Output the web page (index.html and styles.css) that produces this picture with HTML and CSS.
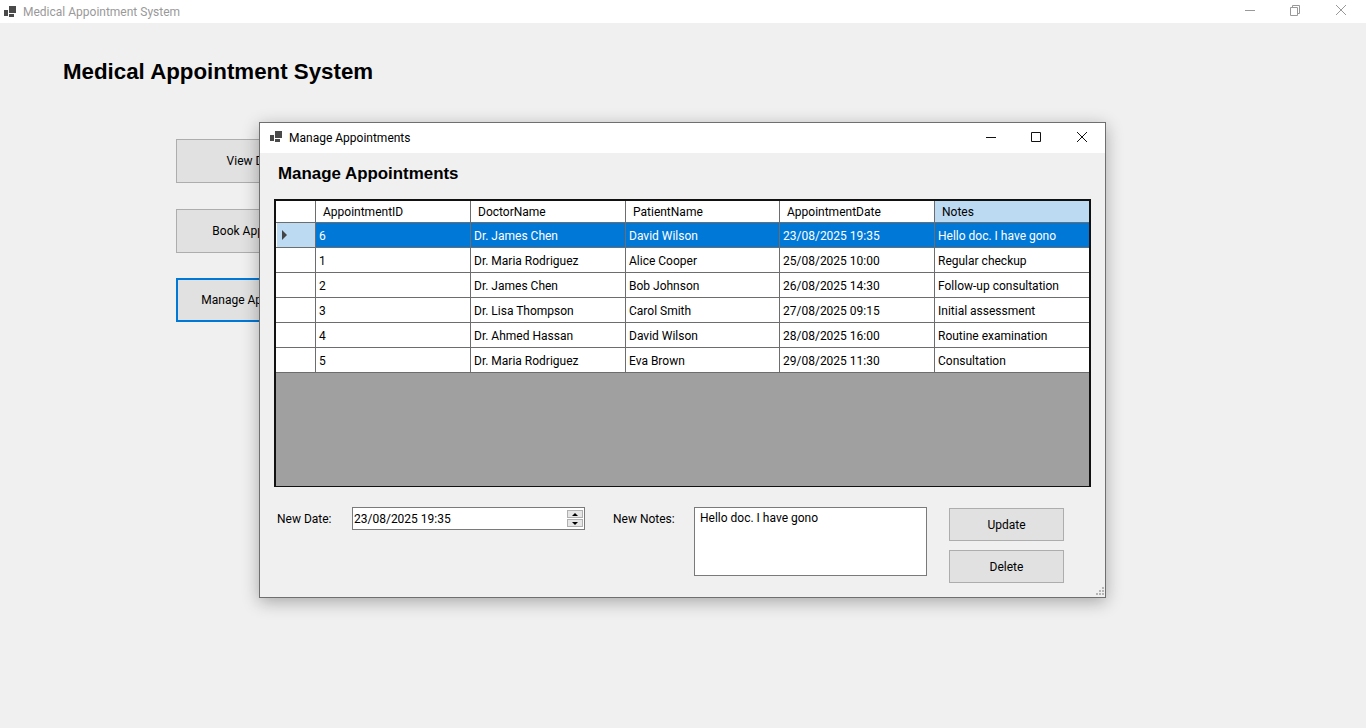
FILE: index.html
```html
<!DOCTYPE html>
<html>
<head>
	<meta charset="utf-8">
	<title>Medical Appointment System</title>
	<link rel="stylesheet" href="styles.css">
</head>
<body>
	<div class="titlebar main-titlebar">
		<svg class="app-icon" width="12" height="12" viewBox="0 0 12 12"><path fill="#4a4a4a" d="M0 4h4v6H0zM5 0h7v7H5zM5 8h5v3H5z"/></svg>
		<span class="title-text">Medical Appointment System</span>
		<div class="win-buttons">
			<svg width="11" height="11" viewBox="0 0 11 11"><path stroke="#999" fill="none" d="M0 5.5h10"/></svg>
			<svg width="11" height="11" viewBox="0 0 11 11"><path stroke="#999" fill="none" d="M.5 2.5h7v8h-7zM2.5 2.5v-2h7v8h-2"/></svg>
			<svg class="close" width="11" height="11" viewBox="0 0 11 11"><path stroke="#999" fill="none" d="M0 0l10 10M10 0L0 10"/></svg>
		</div>
	</div>

	<div class="main-body">
		<h1>Medical Appointment System</h1>
		<div class="menu">
			<button class="btn menu-btn">View Doctors</button>
			<button class="btn menu-btn">Book Appointment</button>
			<button class="btn menu-btn focused">Manage Appointments</button>
		</div>
	</div>

	<div class="dialog">
		<div class="titlebar dlg-titlebar">
			<svg class="app-icon" width="12" height="12" viewBox="0 0 12 12"><path fill="#4a4a4a" d="M0 4h4v6H0zM5 0h7v7H5zM5 8h5v3H5z"/></svg>
			<span class="dlg-title">Manage Appointments</span>
			<div class="dlg-buttons">
				<svg width="11" height="11" viewBox="0 0 11 11"><path stroke="#111" fill="none" d="M0 5.5h10"/></svg>
				<svg width="11" height="11" viewBox="0 0 11 11"><path stroke="#111" fill="none" d="M.5 .5h9v9h-9z"/></svg>
				<svg class="close" width="11" height="11" viewBox="0 0 11 11"><path stroke="#111" fill="none" d="M0 0l10 10M10 0L0 10"/></svg>
			</div>
		</div>
		<div class="dlg-body">
			<h2>Manage Appointments</h2>
			<div class="grid">
				<div class="row head">
					<div class="rowhead"></div>
					<div>AppointmentID</div>
					<div>DoctorName</div>
					<div>PatientName</div>
					<div>AppointmentDate</div>
					<div class="sorted">Notes</div>
				</div>
				<div class="row selected">
					<div class="rowhead"><span class="arrow"></span></div>
					<div>6</div><div>Dr. James Chen</div><div>David Wilson</div><div>23/08/2025 19:35</div><div>Hello doc. I have gono</div>
				</div>
				<div class="row">
					<div class="rowhead"></div>
					<div>1</div><div>Dr. Maria Rodriguez</div><div>Alice Cooper</div><div>25/08/2025 10:00</div><div>Regular checkup</div>
				</div>
				<div class="row">
					<div class="rowhead"></div>
					<div>2</div><div>Dr. James Chen</div><div>Bob Johnson</div><div>26/08/2025 14:30</div><div>Follow-up consultation</div>
				</div>
				<div class="row">
					<div class="rowhead"></div>
					<div>3</div><div>Dr. Lisa Thompson</div><div>Carol Smith</div><div>27/08/2025 09:15</div><div>Initial assessment</div>
				</div>
				<div class="row">
					<div class="rowhead"></div>
					<div>4</div><div>Dr. Ahmed Hassan</div><div>David Wilson</div><div>28/08/2025 16:00</div><div>Routine examination</div>
				</div>
				<div class="row">
					<div class="rowhead"></div>
					<div>5</div><div>Dr. Maria Rodriguez</div><div>Eva Brown</div><div>29/08/2025 11:30</div><div>Consultation</div>
				</div>
			</div>
			<div class="form">
				<label class="lbl date-lbl">New Date:</label>
				<div class="date-field">
					<span>23/08/2025 19:35</span>
					<div class="spinner">
						<div class="spin"><span class="up"></span></div>
						<div class="spin"><span class="down"></span></div>
					</div>
				</div>
				<label class="lbl notes-lbl">New Notes:</label>
				<div class="notes">Hello doc. I have gono</div>
				<div class="actions">
					<button class="btn">Update</button>
					<button class="btn">Delete</button>
				</div>
			</div>
		</div>
		<svg class="grip" width="10" height="10" viewBox="0 0 10 10"><path fill="#b5b5b5" d="M7 0h2v2H7zM4 3h2v2H4zM7 3h2v2H7zM1 6h2v2H1zM4 6h2v2H4zM7 6h2v2H7z"/></svg>
	</div>
</body>
</html>
```

FILE: styles.css
```css
* {box-sizing:border-box;}

html, body {height:100%;}
body {margin:0; background-color:#f0f0f0; font:12px Roboto, "Noto Sans", sans-serif; color:#000; overflow:hidden;}

.titlebar {display:flex; align-items:center; background-color:#fff;}
.main-titlebar {height:23px; padding-left:4px;}
.title-text {margin-left:7px; color:#999;}
.win-buttons {margin-left:auto; display:flex; gap:34px; padding:0 19px 3px 0;}
.close {margin-left:1px;}

.main-body {padding:34px 0 0 63px;}
h1 {font:bold 22.3px "Liberation Sans", Arial, sans-serif; margin:0; line-height:30px;}

.menu {display:flex; flex-direction:column; align-items:flex-start; margin:52px 0 0 113px;}
.btn {background-color:#e1e1e1; border:1px solid #adadad; font:12px Roboto, "Noto Sans", sans-serif; color:#000; padding:0;}
.menu-btn {width:172px; height:44px; margin-bottom:26px;}
.menu-btn.focused {border:2px solid #0078d7; margin-top:-1px;}

.dialog {position:absolute; left:259px; top:122px; width:847px; height:476px; background-color:#f0f0f0; border:1px solid #6f6f6f; box-shadow:0 4px 16px rgba(0,0,0,.3);}
.dlg-titlebar {height:30px; padding:0 0 2px 10px;}
.dlg-title {margin:2px 0 0 7px;}
.dlg-buttons {margin-left:auto; display:flex; gap:34px; padding-right:17px;}

.dlg-body {padding:0 14px;}
h2 {font:bold 16.9px "Liberation Sans", Arial, sans-serif; margin:0; padding:11px 0 0 4px; height:46px;}

.grid {width:817px; height:288px; background-color:#a0a0a0; border:2px solid #111; border-bottom-width:1px;}
.row {display:grid; grid-template-columns:39px 155px 155px 154px 155px 155px; height:25px; background-color:#fff; border-bottom:1px solid #6d6d6d; line-height:26px;}
.row > div {padding-left:3px; border-left:1px solid #6d6d6d; white-space:nowrap; overflow:hidden;}
.row > .rowhead {border-left:0; padding-left:0;}
.head {height:22px; line-height:23px;}
.head > div {padding-left:7px;}
.sorted {background-color:#bcdaf2;}
.selected {background-color:#0078d7; color:#fff;}
.selected .rowhead {background-color:#bcdaf2; border-left:1px solid #fff; padding:7px 0 0 5px;}
.arrow {display:block; width:0; height:0; border-left:5px solid #444; border-top:5px solid transparent; border-bottom:5px solid transparent;}

.form {display:flex; align-items:flex-start; margin-top:20px; padding-left:3px;}
.lbl {line-height:25px;}
.date-lbl {width:75px;}
.notes-lbl {width:81px; margin-left:28px;}
.date-field {width:233px; height:23px; background-color:#fff; border:1px solid #7a7a7a; display:flex; align-items:center; justify-content:space-between; padding-left:1px;}
.spinner {width:17px; padding-right:1px; display:flex; flex-direction:column; gap:1px;}
.spin {height:8px; background-color:#e6e6e6; border:1px solid #b0b0b0; display:flex; align-items:center; justify-content:center;}
.up {border-left:3px solid transparent; border-right:3px solid transparent; border-bottom:3px solid #000;}
.down {border-left:3px solid transparent; border-right:3px solid transparent; border-top:3px solid #000;}
.notes {width:233px; height:69px; background-color:#fff; border:1px solid #7a7a7a; padding:3px 5px;}
.actions {display:flex; flex-direction:column; gap:9px; margin:1px 0 0 22px;}
.actions .btn {width:115px; height:33px;}

.grip {position:absolute; right:0; bottom:0;}
```
